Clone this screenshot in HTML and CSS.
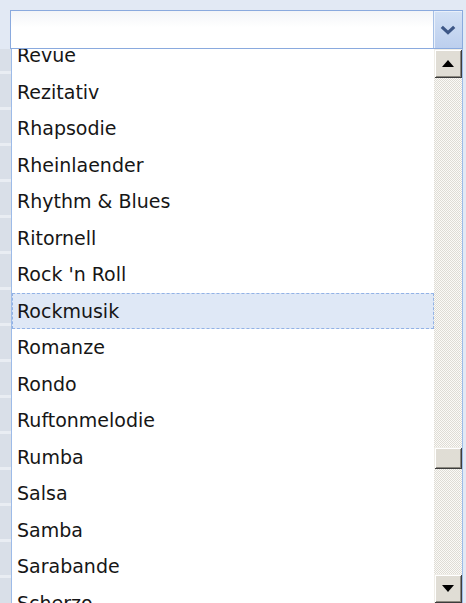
FILE: index.html
```html
<!DOCTYPE html>
<html lang="de">
<head>
<meta charset="utf-8">
<title>Musikrichtung</title>
<link rel="stylesheet" href="styles.css">
</head>
<body>
<div class="page">
  <div class="combo">
    <div class="combo-field"></div>
    <div class="combo-btn">
      <svg width="16" height="10" viewBox="0 0 16 10"><path d="M1.8 1.8 L8 7.6 L14.2 1.8" fill="none" stroke="#3d5787" stroke-width="3.2"/></svg>
    </div>
  </div>
  <div class="dropdown">
    <div class="side"></div>
    <div class="list">
      <ul class="items">
        <li>Revue</li>
        <li>Rezitativ</li>
        <li>Rhapsodie</li>
        <li>Rheinlaender</li>
        <li>Rhythm &amp; Blues</li>
        <li>Ritornell</li>
        <li>Rock 'n Roll</li>
        <li class="current">Rockmusik</li>
        <li>Romanze</li>
        <li>Rondo</li>
        <li>Ruftonmelodie</li>
        <li>Rumba</li>
        <li>Salsa</li>
        <li>Samba</li>
        <li>Sarabande</li>
        <li>Scherzo</li>
      </ul>
      <div class="scrollbar">
        <div class="sb-btn"><svg width="12" height="7" viewBox="0 0 12 7"><path d="M0 7 L6 0 L12 7 Z" fill="#000"/></svg></div>
        <div class="sb-track">
          <div class="sb-thumb"></div>
        </div>
        <div class="sb-btn"><svg width="12" height="7" viewBox="0 0 12 7"><path d="M0 0 L6 7 L12 0 Z" fill="#000"/></svg></div>
      </div>
    </div>
  </div>
</div>
</body>
</html>
```
FILE: styles.css
```css
html, body {
  margin: 0;
  padding: 0;
  height: 100%;
  overflow: hidden;
}

body {
  background: #e2e9f4;
  font-family: "DejaVu Sans", Tahoma, sans-serif;
}

.page {
  padding: 10px 3px 0 10px;
  height: 593px;
  display: flex;
  flex-direction: column;
}

/* closed part of the combo box */
.combo {
  height: 37px;
  border: 1px solid #8aaade;
  display: flex;
  background: #fff;
}

.combo-field {
  flex: 1;
  background: linear-gradient(#f3f5f8, #ffffff 45%);
  border-right: 1px solid #a6c0e6;
}

.combo-btn {
  width: 28px;
  display: flex;
  align-items: center;
  justify-content: center;
  background: linear-gradient(#d3e1f5, #bccfee);
  box-shadow: inset 1px 1px 0 #e9f0fa;
  border-top-right-radius: 2px;
}

/* open dropdown */
.dropdown {
  flex: 1;
  display: flex;
  min-height: 0;
  margin-left: -10px;
}

.side {
  width: 11px;
  background: repeating-linear-gradient(#d9dfe8 0 22px, #e9edf3 22px 25px, #d9dfe8 25px 36px);
}

.list {
  flex: 1;
  display: flex;
  background: #fff;
  border-left: 1px solid #9dbbe8;
  border-right: 1px solid #9dbbe8;
  overflow: hidden;
  min-height: 0;
}

.items {
  flex: 1;
  list-style: none;
  margin: -12px 0 0 0;
  padding: 0;
}

.items li {
  height: 36.5px;
  line-height: 36.5px;
  padding-left: 5px;
  font-size: 19px;
  color: #161616;
  box-sizing: border-box;
  white-space: nowrap;
}

.items li.current {
  background: #dfe8f6;
  border: 1px dashed #92b2e6;
  padding-left: 4px;
  line-height: 34.5px;
}

/* classic scroll bar */
.scrollbar {
  width: 28px;
  display: flex;
  flex-direction: column;
  flex-shrink: 0;
}

.sb-btn {
  height: 29px;
  box-sizing: border-box;
  display: flex;
  align-items: center;
  justify-content: center;
  background: #e0ddd5;
  box-shadow: inset 1px 1px 0 #efede7, inset -1px -1px 0 #3c3c3c, inset 2px 2px 0 #ffffff, inset -2px -2px 0 #8c8980;
}

.sb-track {
  flex: 1;
  background:
    conic-gradient(#fbfaf7 25%, #dedcd5 0 50%, #fbfaf7 0 75%, #dedcd5 0) 0 0 / 2px 2px;
  position: relative;
}

.sb-thumb {
  position: absolute;
  left: 0;
  right: 0;
  top: 369px;
  height: 22px;
  background: #e0ddd5;
  box-shadow: inset 1px 1px 0 #efede7, inset -1px -1px 0 #3c3c3c, inset 2px 2px 0 #ffffff, inset -2px -2px 0 #8c8980;
}
```
